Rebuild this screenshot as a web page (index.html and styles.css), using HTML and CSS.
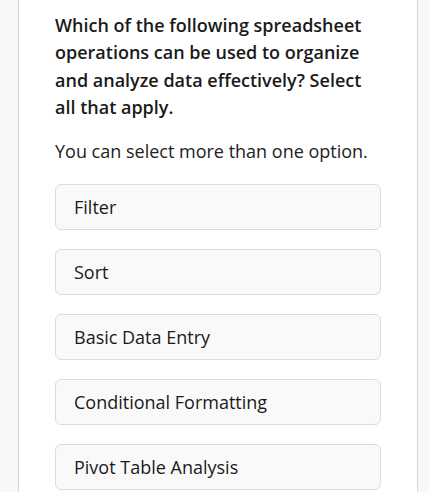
FILE: index.html
```html
<!DOCTYPE html>
<html>
<head>
<meta charset="utf-8">
<link rel="stylesheet" href="styles.css">
</head>
<body>
<div class="page">
  <div class="card">
    <h2 class="question">Which of the following spreadsheet operations can be used to organize and analyze data effectively? Select all that apply.</h2>
    <p class="hint">You can select more than one option.</p>
    <div class="options">
      <div class="option">Filter</div>
      <div class="option">Sort</div>
      <div class="option">Basic Data Entry</div>
      <div class="option">Conditional Formatting</div>
      <div class="option">Pivot Table Analysis</div>
    </div>
  </div>
</div>
</body>
</html>
```
FILE: styles.css
```css
html, body {
  margin: 0;
  padding: 0;
  background: #f8f8f8;
  font-family: "Open Sans", sans-serif;
  color: #1a1a1a;
}
.page {
  padding-left: 18px;
  height: 492px;
  overflow: hidden;
}
.card {
  box-sizing: border-box;
  width: 400px;
  background: #fff;
  border-left: 1px solid #d6d6d6;
  border-right: 1px solid #d6d6d6;
  padding: 12px 36px 20px 36px;
  min-height: 600px;
}
.question {
  margin: 0;
  font-size: 18px;
  font-weight: 600;
  line-height: 27.3px;
  color: #1a1a1a;
}
.hint {
  margin: 17px 0 0 0;
  font-size: 18px;
  line-height: 27px;
  color: #222;
}
.options {
  margin-top: 18.5px;
  display: flex;
  flex-direction: column;
  gap: 18.5px;
}
.option {
  height: 44.5px;
  border: 1px solid #dcdcdc;
  border-radius: 6px;
  background: #f9f9f9;
  padding: 0 18px;
  display: flex;
  align-items: center;
  font-size: 18px;
  color: #1a1a1a;
}
```
